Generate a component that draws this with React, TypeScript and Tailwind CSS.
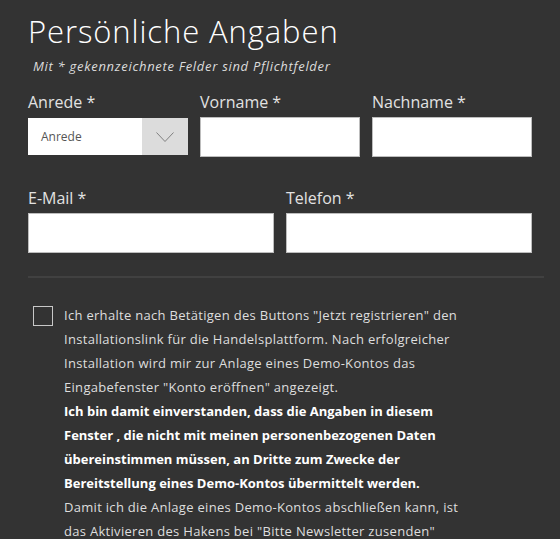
const font = { fontFamily: "'Open Sans', Lato, sans-serif" };

function Field({ label, wide }: { label: string; wide?: boolean }) {
  return (
    <div className={wide ? "w-1/2 pr-3" : "w-1/3 pr-3"}>
      <label className="block h-[27px] text-[16px] leading-[24px] text-[#e2e2e2]">{label}</label>
      <input className="block h-10 w-full border border-[#bdbdbd] bg-white px-3 text-sm text-[#333] outline-none" />
    </div>
  );
}

export default function App() {
  return (
    <div className="min-h-[539px] w-full bg-[#333333] pl-7 pr-4 pt-[12px] text-[#e6e6e6]" style={font}>
      <h1 className="text-[31px] font-light leading-[38px] tracking-[0.9px] text-white">
        Persönliche Angaben
      </h1>
      <p className="mt-[8px] pl-[5px] text-[13px] italic leading-[16px] tracking-[0.7px] text-[#dcdcdc]">
        Mit * gekennzeichnete Felder sind Pflichtfelder
      </p>

      <div className="mt-[16px] flex">
        <div className="w-1/3 pr-3">
          <label className="block h-[27px] text-[16px] leading-[24px] text-[#e2e2e2]">Anrede *</label>
          <div className="mt-px flex h-[37px] w-full bg-white">
            <div className="flex flex-1 items-center pl-[13px] text-[12px] text-[#555]">Anrede</div>
            <div className="flex w-[46px] items-center justify-center bg-[#dcdcdc]">
              <svg width="18" height="10" viewBox="0 0 18 10" fill="none">
                <polyline points="0.5,0.5 9,9.5 17.5,0.5" stroke="#808080" strokeWidth="1" />
              </svg>
            </div>
          </div>
        </div>
        <Field label="Vorname *" />
        <Field label="Nachname *" />
      </div>

      <div className="mt-[29px] flex">
        <Field label="E-Mail *" wide />
        <Field label="Telefon *" wide />
      </div>

      <div className="mt-[23px] h-[2px] w-full bg-[#414141]" />

      <div className="mt-[28px] flex items-start">
        <div className="ml-[5px] mr-[11px] h-5 w-5 shrink-0 border border-[#c8c8c8]" />
        <p className="-mt-[3px] text-[13px] leading-[24px] tracking-[0.3px] text-[#dedede]">
          Ich erhalte nach Betätigen des Buttons "Jetzt registrieren" den
          <br />
          Installationslink für die Handelsplattform. Nach erfolgreicher
          <br />
          Installation wird mir zur Anlage eines Demo-Kontos das
          <br />
          Eingabefenster "Konto eröffnen" angezeigt.
          <br />
          <span className="font-bold tracking-normal text-white">
            Ich bin damit einverstanden, dass die Angaben in diesem
            <br />
            Fenster , die nicht mit meinen personenbezogenen Daten
            <br />
            übereinstimmen müssen, an Dritte zum Zwecke der
            <br />
            Bereitstellung eines Demo-Kontos übermittelt werden.
          </span>
          <br />
          Damit ich die Anlage eines Demo-Kontos abschließen kann, ist
          <br />
          das Aktivieren des Hakens bei "Bitte Newsletter zusenden"
        </p>
      </div>
    </div>
  );
}
